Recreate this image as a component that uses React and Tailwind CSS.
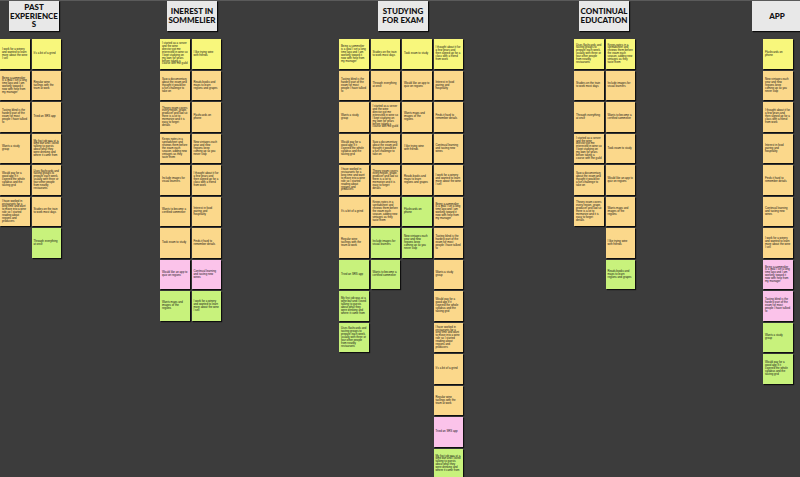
import React from "react";

const POOL = [
  "I work for a winery and wanted to learn more about the wine I sell",
  "I started as a server and the wine director got me interested in wine so I kept studying on my own for years before taking a course with the guild",
  "I thought about it for a few years and then signed up for a class with a friend from work",
  "My first job was at a wine bar and I loved talking to guests about what they were drinking and where it came from",
  "I like trying wine with friends",
  "I have worked in restaurants for a long time and want to move into a wine role so I started reading about regions and producers",
  "Wants to become a certified sommelier",
  "Being a sommelier is a goal I set a long time ago and I am working toward it now with help from my manager",
  "Saw a documentary about the exam and thought it would be a fun challenge to take on",
  "Interest in food pairing and hospitality",
  "Uses flashcards and tasting groups to prepare each week, usually with three or four other people from nearby restaurants",
  "Reads books and maps to learn regions and grapes",
  "It's a bit of a grind",
  "Took exam to study",
  "Tasting blind is the hardest part of the exam for most people I have talked to",
  "Theory exam covers every region, grape, producer and law so there is a lot to memorize and it is easy to forget details",
  "Finds it hard to remember details",
  "Studies on the train to work most days",
  "Flashcards on phone",
  "Regular wine tastings with the team at work",
  "Would like an app to quiz on regions",
  "Wants a study group",
  "Keeps notes in a spreadsheet and reviews them before the exam each season, adding new vintages as they taste them",
  "Continual learning and tasting new wines",
  "Through everything at once",
  "New vintages each year and new regions keep coming up so you never stop",
  "Tried an SRS app",
  "Wants maps and images of the regions",
  "Would pay for a good app if it covered the whole syllabus and the tasting grid",
  "Include images for visual learners",
];

const COLORS = {
  Y: "bg-[#f8f77c]",
  O: "bg-[#fbd88b]",
  G: "bg-[#c8f27c]",
  P: "bg-[#fbc3ea]",
};

const GROUPS = [
  { title: ["PAST", "EXPERIENCE", "S"], ml: "ml-0", hml: "ml-[9px]", nml: "ml-0", cols: ["YOOOOO", "YOOOOOG"] },
  { title: ["INEREST IN", "SOMMELIER"], ml: "ml-[99px]", hml: "ml-[7px]", nml: "ml-0", cols: ["YOOOOOOPG", "YOOOOOOPG"] },
  { title: ["STUDYING", "FOR EXAM"], ml: "ml-[118px]", hml: "ml-[39px]", nml: "ml-0", cols: ["YOOOOOOGGG", "YOOOOOGG", "YOOOOGG", "YOOOOOOOOOOOPG"] },
  { title: ["CONTINUAL", "EDUCATION"], ml: "ml-[111px]", hml: "ml-[5px]", nml: "ml-0", cols: ["YOOOOO", "YOOOOOOG"] },
  { title: ["APP"], ml: "ml-[117px]", hml: "ml-0", nml: "ml-[11px]", cols: ["YOOOOOOPPGG"] },
];

function Note({ c, text }) {
  return (
    <div
      className={`w-[29.5px] h-[29.5px] shrink-0 flex items-center px-[2px] ${COLORS[c]} shadow-[1px_1px_1px_rgba(0,0,0,0.75)]`}
    >
      <p className="text-[2.8px] leading-[2.9px] text-[#111] font-['Liberation_Sans',Arial,sans-serif]">
        {text}
      </p>
    </div>
  );
}

function Header({ lines, hml }) {
  return (
    <div
      className={`${hml} w-[50px] h-[29.5px] flex flex-col items-center justify-center bg-[#e8e8e8] shadow-[1px_1px_1px_rgba(0,0,0,0.8)] font-['Lato',Arial,sans-serif] font-black text-[8px] leading-[8.5px] text-[#111] text-center`}
    >
      {lines.map((l) => (
        <span key={l} className="whitespace-nowrap">
          {l}
        </span>
      ))}
    </div>
  );
}

export default function App() {
  let k = 0;
  return (
    <div className="w-[800px] h-[477px] overflow-hidden bg-[#3c3c3c] border-t border-[#5a5a5a] flex items-start">
      {GROUPS.map((g, gi) => (
        <div key={gi} className={`${g.ml} shrink-0 flex flex-col items-start`}>
          <Header lines={g.title} hml={g.hml} />
          <div className={`${g.nml} mt-[8.5px] flex gap-[2px] items-start`}>
            {g.cols.map((col, ci) => (
              <div key={ci} className="flex flex-col gap-[2px]">
                {col.split("").map((c, ri) => {
                  const text = POOL[(k++ * 7) % POOL.length];
                  return <Note key={ri} c={c} text={text} />;
                })}
              </div>
            ))}
          </div>
        </div>
      ))}
    </div>
  );
}
